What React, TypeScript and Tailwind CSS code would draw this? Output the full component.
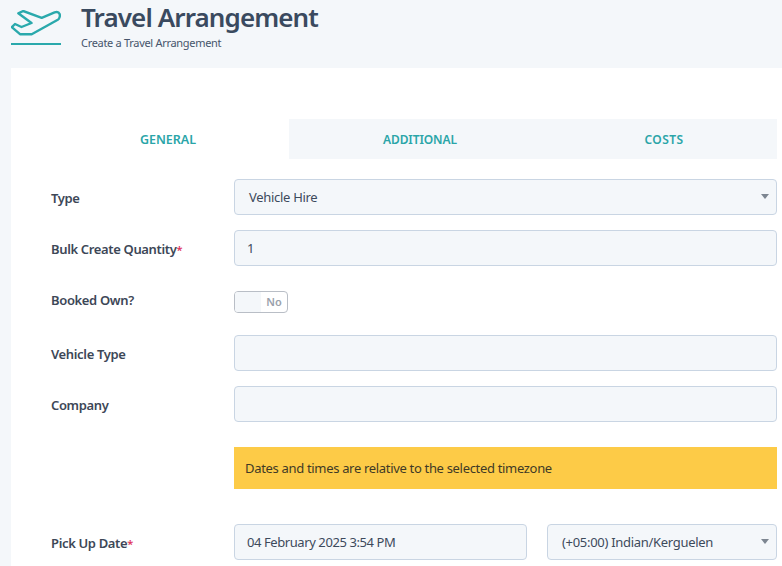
import React from 'react';

const inputBox = 'h-9 rounded border border-[#c9d5e3] bg-[#f4f7fa] text-[#3d4a5c] text-[13px] tracking-[-0.3px] pt-[2px] flex items-center';

function Caret() {
  return <div className="absolute right-[7px] top-[14px] w-0 h-0 border-l-[4px] border-r-[4px] border-t-[5px] border-l-transparent border-r-transparent border-t-[#7d8691]" />;
}

function Row({ label, required, className, labelClass, children }: { label?: string; required?: boolean; className: string; labelClass?: string; children: React.ReactNode }) {
  return (
    <div className={`flex items-center ${className}`}>
      <div className={`w-[183px] shrink-0 text-[13px] tracking-[-0.35px] font-semibold text-[#3d4757] ${labelClass ?? 'pt-1'}`}>
        {label}
        {required && <span className="text-[#e0345c] text-[11px]">*</span>}
      </div>
      <div className="flex-1 min-w-0">{children}</div>
    </div>
  );
}

export default function App() {
  return (
    <div className="h-[566px] overflow-hidden bg-[#f4f7fa] font-['Noto_Sans',sans-serif]">
      <div className="flex h-[68px] pl-[11px]">
        <svg width="50" height="46" viewBox="0 0 50 46" fill="none" className="mt-[10px] shrink-0">
          <path d="M48.6 4c-.7-1.7-3-2.200-5-1.600L30.700 7.800 12.300 1 7.300 3.300 20.500 13 10.500 17 4 14 .8 17.200 9 24.200h11.700L46.800 9.800c1.600-1 2.500-3.900 1.800-5.800Z" stroke="#2aa9ac" strokeWidth="2.400" strokeLinejoin="round" />
          <rect x="0" y="33" width="50" height="2" fill="#2aa9ac" />
        </svg>
        <div className="ml-5">
          <h1 className="text-[26px] tracking-[-0.9px] leading-[34px] font-semibold text-[#3a4a5f]">Travel Arrangement</h1>
          <p className="text-[11px] tracking-[-0.3px] leading-4 mt-[1px] text-[#46556b]">Create a Travel Arrangement</p>
        </div>
      </div>
      <div className="ml-[11px] bg-white h-[498px] pt-[51px] pl-10 pr-[5px]">
        <div className="flex h-10 text-xs font-semibold text-[#2aa5a8] uppercase">
          <div className="w-[238px] pr-1 pt-[2px] text-[12.500px] flex items-center justify-center">General</div>
          <div className="flex-1 flex bg-[#f4f7fa] pt-[2px]">
            <div className="w-[262px] tracking-[-0.1px] flex items-center justify-center">Additional</div>
            <div className="flex-1 tracking-[0.4px] flex items-center justify-center">Costs</div>
          </div>
        </div>
        <Row label="Type" className="mt-5">
          <div className={`${inputBox} relative pl-[14px]`}>Vehicle Hire<Caret /></div>
        </Row>
        <Row label="Bulk Create Quantity" required className="mt-[15px]">
          <div className={`${inputBox} pl-3`}>1</div>
        </Row>
        <Row label="Booked Own?" labelClass="pb-[2px]" className="mt-[25px] h-[22px]">
          <div className="w-[54px] h-[22px] rounded border border-[#b9bec6] flex overflow-hidden">
            <div className="w-[26px] bg-[#f4f7fa]" />
            <div className="flex-1 flex items-center justify-center text-[11px] font-semibold text-[#9aa1ab]">No</div>
          </div>
        </Row>
        <Row label="Vehicle Type" className="mt-[22px]">
          <div className={inputBox} />
        </Row>
        <Row label="Company" className="mt-[15px]">
          <div className={inputBox} />
        </Row>
        <Row className="mt-[25px]">
          <div className="h-[42px] bg-[#fdcb47] pl-[11px] pt-[2px] flex items-center text-[13px] tracking-[-0.32px] text-[#3f3a26]">Dates and times are relative to the selected timezone</div>
        </Row>
        <Row label="Pick Up Date" required className="mt-[35px]">
          <div className="flex gap-5">
            <div className={`${inputBox} w-[293px] pl-3 tracking-[-0.42px]`}>04 February 2025 3:54 PM</div>
            <div className={`${inputBox} flex-1 relative pl-[14px]`}>(+05:00) Indian/Kerguelen<Caret /></div>
          </div>
        </Row>
      </div>
    </div>
  );
}
